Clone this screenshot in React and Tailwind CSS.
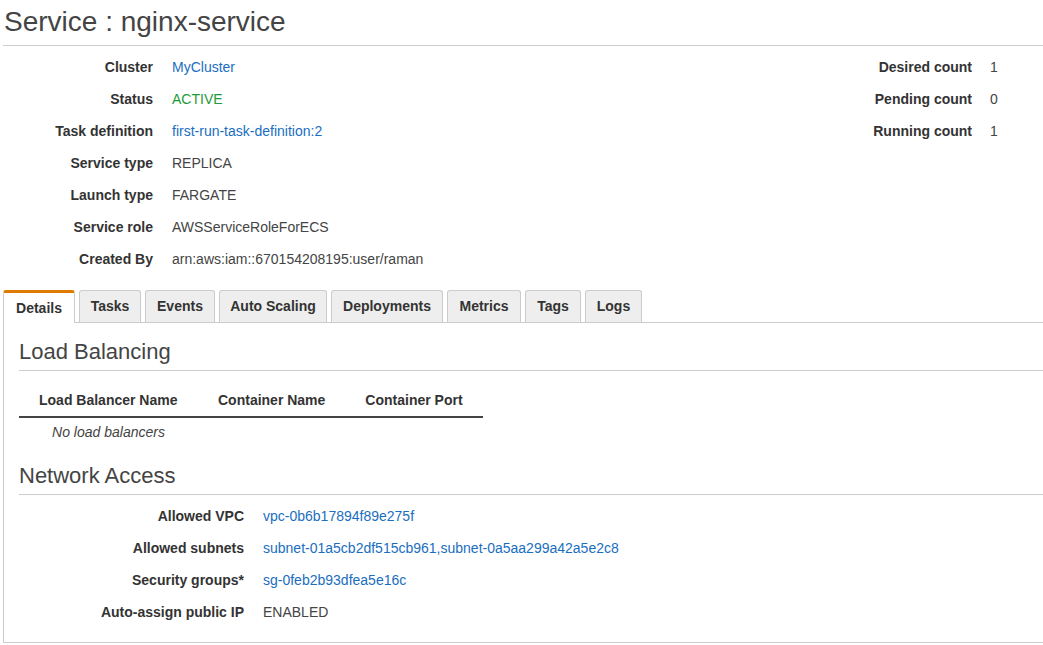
const summaryLeft = [
  { label: 'Cluster', value: 'MyCluster', kind: 'link' },
  { label: 'Status', value: 'ACTIVE', kind: 'ok' },
  { label: 'Task definition', value: 'first-run-task-definition:2', kind: 'link' },
  { label: 'Service type', value: 'REPLICA' },
  { label: 'Launch type', value: 'FARGATE' },
  { label: 'Service role', value: 'AWSServiceRoleForECS' },
  { label: 'Created By', value: 'arn:aws:iam::670154208195:user/raman' },
];

const summaryRight = [
  { label: 'Desired count', value: '1' },
  { label: 'Pending count', value: '0' },
  { label: 'Running count', value: '1' },
];

const tabs = [
  { name: 'Details', w: 'w-[72px]' },
  { name: 'Tasks', w: 'w-[62px]' },
  { name: 'Events', w: 'w-[70px]' },
  { name: 'Auto Scaling', w: 'w-[108px]' },
  { name: 'Deployments', w: 'w-[112px]' },
  { name: 'Metrics', w: 'w-[74px]' },
  { name: 'Tags', w: 'w-[56px]' },
  { name: 'Logs', w: 'w-[57px]' },
];

const network = [
  { label: 'Allowed VPC', value: 'vpc-0b6b17894f89e275f', kind: 'link' },
  { label: 'Allowed subnets', value: 'subnet-01a5cb2df515cb961,subnet-0a5aa299a42a5e2c8', kind: 'link' },
  { label: 'Security groups*', value: 'sg-0feb2b93dfea5e16c', kind: 'link' },
  { label: 'Auto-assign public IP', value: 'ENABLED' },
];

function valueClass(kind) {
  if (kind === 'link') return 'text-[#1a6ec0]';
  if (kind === 'ok') return 'text-[#1d9a3a]';
  return 'text-[#444]';
}

function Rows({ items, labelW }) {
  return (
    <div className={`grid ${labelW} gap-x-[19px]`}>
      {items.map((r) => (
        <div key={r.label} className="contents">
          <div className="h-[32px] flex items-center justify-end font-bold text-[#333] whitespace-nowrap">{r.label}</div>
          <div className={`h-[32px] flex items-center whitespace-nowrap ${valueClass(r.kind)}`}>{r.value}</div>
        </div>
      ))}
    </div>
  );
}

export default function App() {
  return (
    <div className="w-[1043px] h-[645px] overflow-hidden flex flex-col bg-white pl-[3px] text-[14px] text-[#444] font-['Liberation_Sans',Arial,sans-serif]">
      <h1 className="shrink-0 h-[46px] border-b border-[#cccccc] text-[28px] leading-[44px] pl-px text-[#444]">
        Service : nginx-service
      </h1>

      <div className="shrink-0 flex pt-[5px]">
        <Rows items={summaryLeft} labelW="grid-cols-[150px_auto]" />
        <div className="ml-auto">
          <div className="grid grid-cols-[auto_53px] gap-x-[18px]">
            {summaryRight.map((r) => (
              <div key={r.label} className="contents">
                <div className="h-[32px] flex items-center justify-end font-bold text-[#333]">{r.label}</div>
                <div className="h-[32px] flex items-center">{r.value}</div>
              </div>
            ))}
          </div>
        </div>
      </div>

      <div className="shrink-0 mt-[15px] flex gap-[4px] border-b border-[#cccccc]">
        {tabs.map((t, i) => (
          <div
            key={t.name}
            className={
              i === 0
                ? `${t.w} h-[33px] -mb-px flex items-center justify-center bg-white border-t-[3px] border-t-[#e07b00] border-x border-x-[#cccccc] rounded-t-[3px] font-bold text-[#333]`
                : `${t.w} h-[32px] flex items-center justify-center bg-[#eeeeee] border border-b-0 border-[#cccccc] rounded-t-[3px] font-bold text-[#333]`
            }
          >
            {t.name}
          </div>
        ))}
      </div>

      <div className="flex-1 min-h-0 mb-[2px] overflow-hidden border-l border-b border-[#cccccc] pl-[15px]">
        <h2 className="mt-[15px] h-[33px] border-b border-[#cccccc] text-[22px] leading-[28px] text-[#444]">
          Load Balancing
        </h2>

        <table className="mt-[13px] border-collapse whitespace-nowrap">
          <thead>
            <tr className="border-b-2 border-[#444]">
              <th className="w-[179px] h-[33px] px-[20px] text-left font-bold text-[#333]">Load Balancer Name</th>
              <th className="w-[147px] px-[20px] text-left font-bold text-[#333]">Container Name</th>
              <th className="w-[137px] px-[20px] text-left font-bold text-[#333]">Container Port</th>
            </tr>
          </thead>
          <tbody>
            <tr>
              <td className="h-[30px] text-center italic text-[#444]">No load balancers</td>
              <td></td>
              <td></td>
            </tr>
          </tbody>
        </table>

        <h2 className="mt-[15px] h-[33px] border-b border-[#cccccc] text-[22px] leading-[28px] text-[#444]">
          Network Access
        </h2>

        <div className="pt-[5px]">
          <Rows items={network} labelW="grid-cols-[225px_auto]" />
        </div>
      </div>
    </div>
  );
}
